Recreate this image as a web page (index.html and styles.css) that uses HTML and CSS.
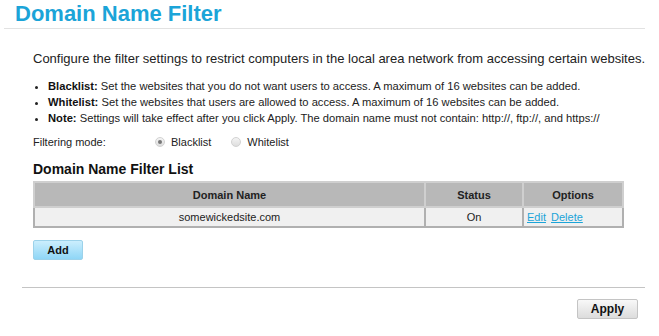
FILE: index.html
```html
<!DOCTYPE html>
<html lang="en">
<head>
  <meta charset="UTF-8" />
  <title>Domain Name Filter</title>
  <link rel="stylesheet" href="styles.css">
</head>
<body>
  <h1 class="title">Domain Name Filter</h1>

  <div class="content">
    <p class="intro">Configure the filter settings to restrict computers in the local area network from accessing certain websites.</p>

    <ul class="tips">
      <li><b>Blacklist:</b> Set the websites that you do not want users to access. A maximum of 16 websites can be added.</li>
      <li><b>Whitelist:</b> Set the websites that users are allowed to access. A maximum of 16 websites can be added.</li>
      <li><b>Note:</b> Settings will take effect after you click Apply. The domain name must not contain: http://, ftp://, and https://</li>
    </ul>

    <div class="mode">
      <span class="mode-label">Filtering mode:</span>
      <label><input type="radio" name="mode" checked> Blacklist</label>
      <label><input type="radio" name="mode"> Whitelist</label>
    </div>

    <h3 class="list-title">Domain Name Filter List</h3>

    <table class="list">
      <thead>
        <tr>
          <th>Domain Name</th>
          <th class="col-status">Status</th>
          <th class="col-opt">Options</th>
        </tr>
      </thead>
      <tbody>
        <tr>
          <td>somewickedsite.com</td>
          <td>On</td>
          <td class="opts"><a href="#">Edit</a> <a href="#">Delete</a></td>
        </tr>
      </tbody>
    </table>

    <button class="btn-add">Add</button>
  </div>

  <div class="footer">
    <button class="btn-apply">Apply</button>
  </div>
</body>
</html>
```

FILE: styles.css
```css
body {
  margin: 0;
  padding: 0 14px 0 4px;
  font-family: "Liberation Sans", Arial, sans-serif;
  color: #222;
  background: #fff;
}
.title {
  margin: 0;
  padding: 3px 0 3px 11px;
  font-size: 22px;
  font-weight: bold;
  color: #1ba4d8;
  border-bottom: 1px solid #e2e2e2;
  line-height: 22px;
}
.content {
  padding-left: 29px;
}
.intro {
  margin: 22px 0 0;
  font-size: 13px;
  line-height: 16px;
  white-space: nowrap;
}
.tips {
  margin: 11px 0 0;
  padding-left: 15px;
  font-size: 11.2px;
  line-height: 16px;
}
.tips b {
  color: #111;
}
.mode {
  display: flex;
  align-items: center;
  margin-top: 8px;
  font-size: 11px;
  height: 16px;
}
.mode-label {
  width: 122px;
}
.mode label {
  display: flex;
  align-items: center;
  margin-right: 14px;
}
.mode label + label {
  margin-left: 6px;
}
.mode input {
  appearance: none;
  margin: 0 6px 0 0;
  width: 10px;
  height: 10px;
  border: 1px solid #d2d2d2;
  border-radius: 50%;
  background: linear-gradient(#f4f4f4, #dedede);
  display: flex;
  align-items: center;
  justify-content: center;
}
.mode input:checked::after {
  content: "";
  width: 4px;
  height: 4px;
  border-radius: 50%;
  background: #777;
}
.list-title {
  margin: 11px 0 4px;
  font-size: 14px;
  line-height: 16px;
  color: #111;
}
.list {
  width: 591px;
  border-collapse: collapse;
  border: 2px solid #b0b0b0;
  font-size: 11px;
}
.list th, .list td {
  border: 2px solid #d0d0d0;
  text-align: center;
}
.list th {
  background: #b8b8b8;
  height: 21px;
  border-color: #cfcfcf;
}
.list td {
  background: #f0f0f0;
  height: 16px;
  border-color: #b0b0b0;
}
.col-status {
  width: 94px;
}
.col-opt {
  width: 96px;
}
.list td.opts {
  text-align: left;
  padding-left: 3px;
}
.opts a {
  color: #1ba4d8;
  margin-right: 2px;
}
.btn-add {
  margin-top: 12px;
  width: 50px;
  height: 20px;
  border: 1px solid #9cd2ea;
  border-radius: 2px;
  background: linear-gradient(#cbeefd, #8fd6f6);
  font-family: inherit;
  font-size: 11px;
  font-weight: bold;
  color: #111;
}
.footer {
  margin: 27px 0 0 18px;
  border-top: 1px solid #c4c4c4;
  display: flex;
  justify-content: flex-end;
  padding: 11px 7px 0 0;
}
.btn-apply {
  width: 61px;
  height: 20px;
  border: 1px solid #c4c4c4;
  border-radius: 2px;
  background: linear-gradient(#f8f8f8, #dcdcdc);
  font-family: inherit;
  font-size: 12px;
  font-weight: bold;
  color: #111;
}
```
